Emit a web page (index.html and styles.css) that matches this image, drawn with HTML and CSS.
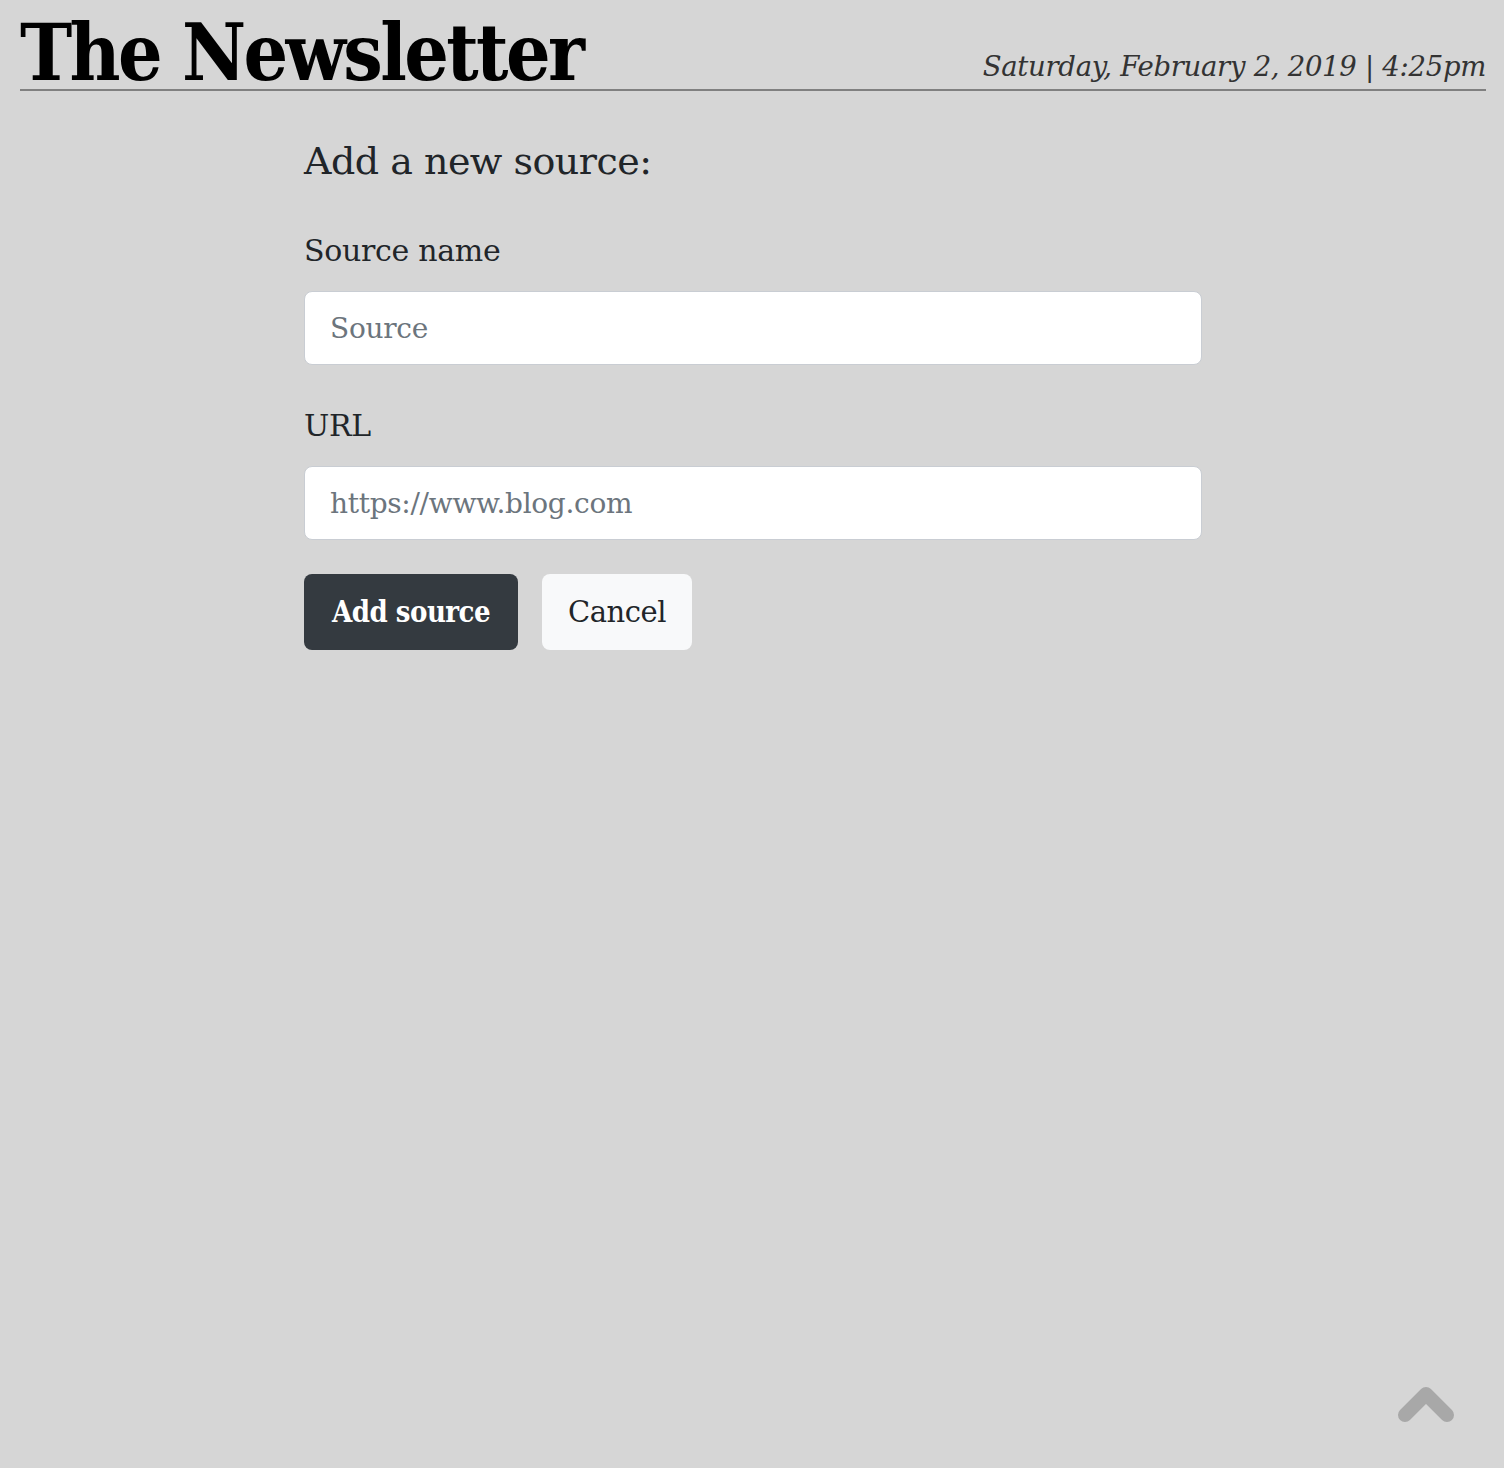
FILE: index.html
```html
<!DOCTYPE html>
<html lang="en">
<head>
<meta charset="utf-8">
<title>The Newsletter</title>
<link rel="stylesheet" href="styles.css">
</head>
<body>
<header class="masthead">
  <h1 class="title">The Newsletter</h1>
  <div class="dateline">Saturday, February 2, 2019 | 4:25pm</div>
</header>
<main class="content">
  <h2 class="form-title">Add a new source:</h2>
  <form class="source-form">
    <label class="field-label" for="name">Source name</label>
    <input class="field-input" id="name" type="text" placeholder="Source">
    <label class="field-label label-url" for="url">URL</label>
    <input class="field-input" id="url" type="text" placeholder="https://www.blog.com">
    <div class="actions">
      <button type="button" class="btn btn-dark">Add source</button>
      <button type="button" class="btn btn-light">Cancel</button>
    </div>
  </form>
</main>
<a class="to-top" href="#" aria-label="Back to top">
  <svg width="64" height="44" viewBox="0 0 64 44"><polyline points="11,33 32,12 53,33" fill="none" stroke="#a8a8a8" stroke-width="14" stroke-linecap="round" stroke-linejoin="round"/></svg>
</a>
</body>
</html>
```
FILE: styles.css
```css
html, body {
  margin: 0;
  padding: 0;
  background: #d6d6d6;
  min-height: 100%;
}
body {
  font-family: "DejaVu Serif", "Liberation Serif", serif;
  color: #212529;
}
.masthead {
  margin: 0 18px 0 20px;
  display: flex;
  justify-content: space-between;
  align-items: flex-end;
  border-bottom: 2px solid #808080;
  height: 89px;
}
.title {
  margin: 0;
  font-size: 78px;
  line-height: 72px;
  font-weight: bold;
  color: #000;
  letter-spacing: -2.6px;
  font-stretch: condensed;
}
.dateline {
  font-style: italic;
  font-weight: 300;
  font-size: 27.5px;
  line-height: 45px;
  color: #333;
  letter-spacing: -0.3px;
}
.content {
  width: 898px;
  margin: 0 auto;
  padding: 40px 0 0 2px;
}
.form-title {
  margin: 0;
  font-weight: normal;
  font-size: 38px;
  line-height: 60px;
  letter-spacing: -0.5px;
}
.source-form {
  display: flex;
  flex-direction: column;
}
.field-label {
  font-size: 30px;
  line-height: 40px;
  margin-top: 40px;
  margin-bottom: 20px;
  letter-spacing: -0.3px;
}
.label-url {
  margin-top: 41px;
}
.field-input {
  box-sizing: border-box;
  height: 74px;
  width: 100%;
  border: 1px solid #c9cdd3;
  border-radius: 8px;
  background: #fff;
  padding: 0 25px;
  font-family: inherit;
  font-size: 28px;
  color: #495057;
  outline: none;
}
.field-input::placeholder {
  color: #6c757d;
  font-weight: 300;
  letter-spacing: -0.3px;
}
.actions {
  display: flex;
  gap: 24px;
  margin-top: 34px;
}
.btn {
  height: 76px;
  border: none;
  border-radius: 8px;
  font-family: inherit;
  font-size: 29px;
  padding: 0 26px;
  letter-spacing: -0.5px;
  cursor: pointer;
}
.btn-dark {
  background: #343a40;
  color: #fff;
  font-weight: bold;
  font-stretch: condensed;
  padding: 0 28px;
}
.btn-light {
  background: #f8f9fa;
  color: #212529;
}
.to-top {
  position: fixed;
  right: 46px;
  bottom: 42px;
  display: block;
  line-height: 0;
}
```
